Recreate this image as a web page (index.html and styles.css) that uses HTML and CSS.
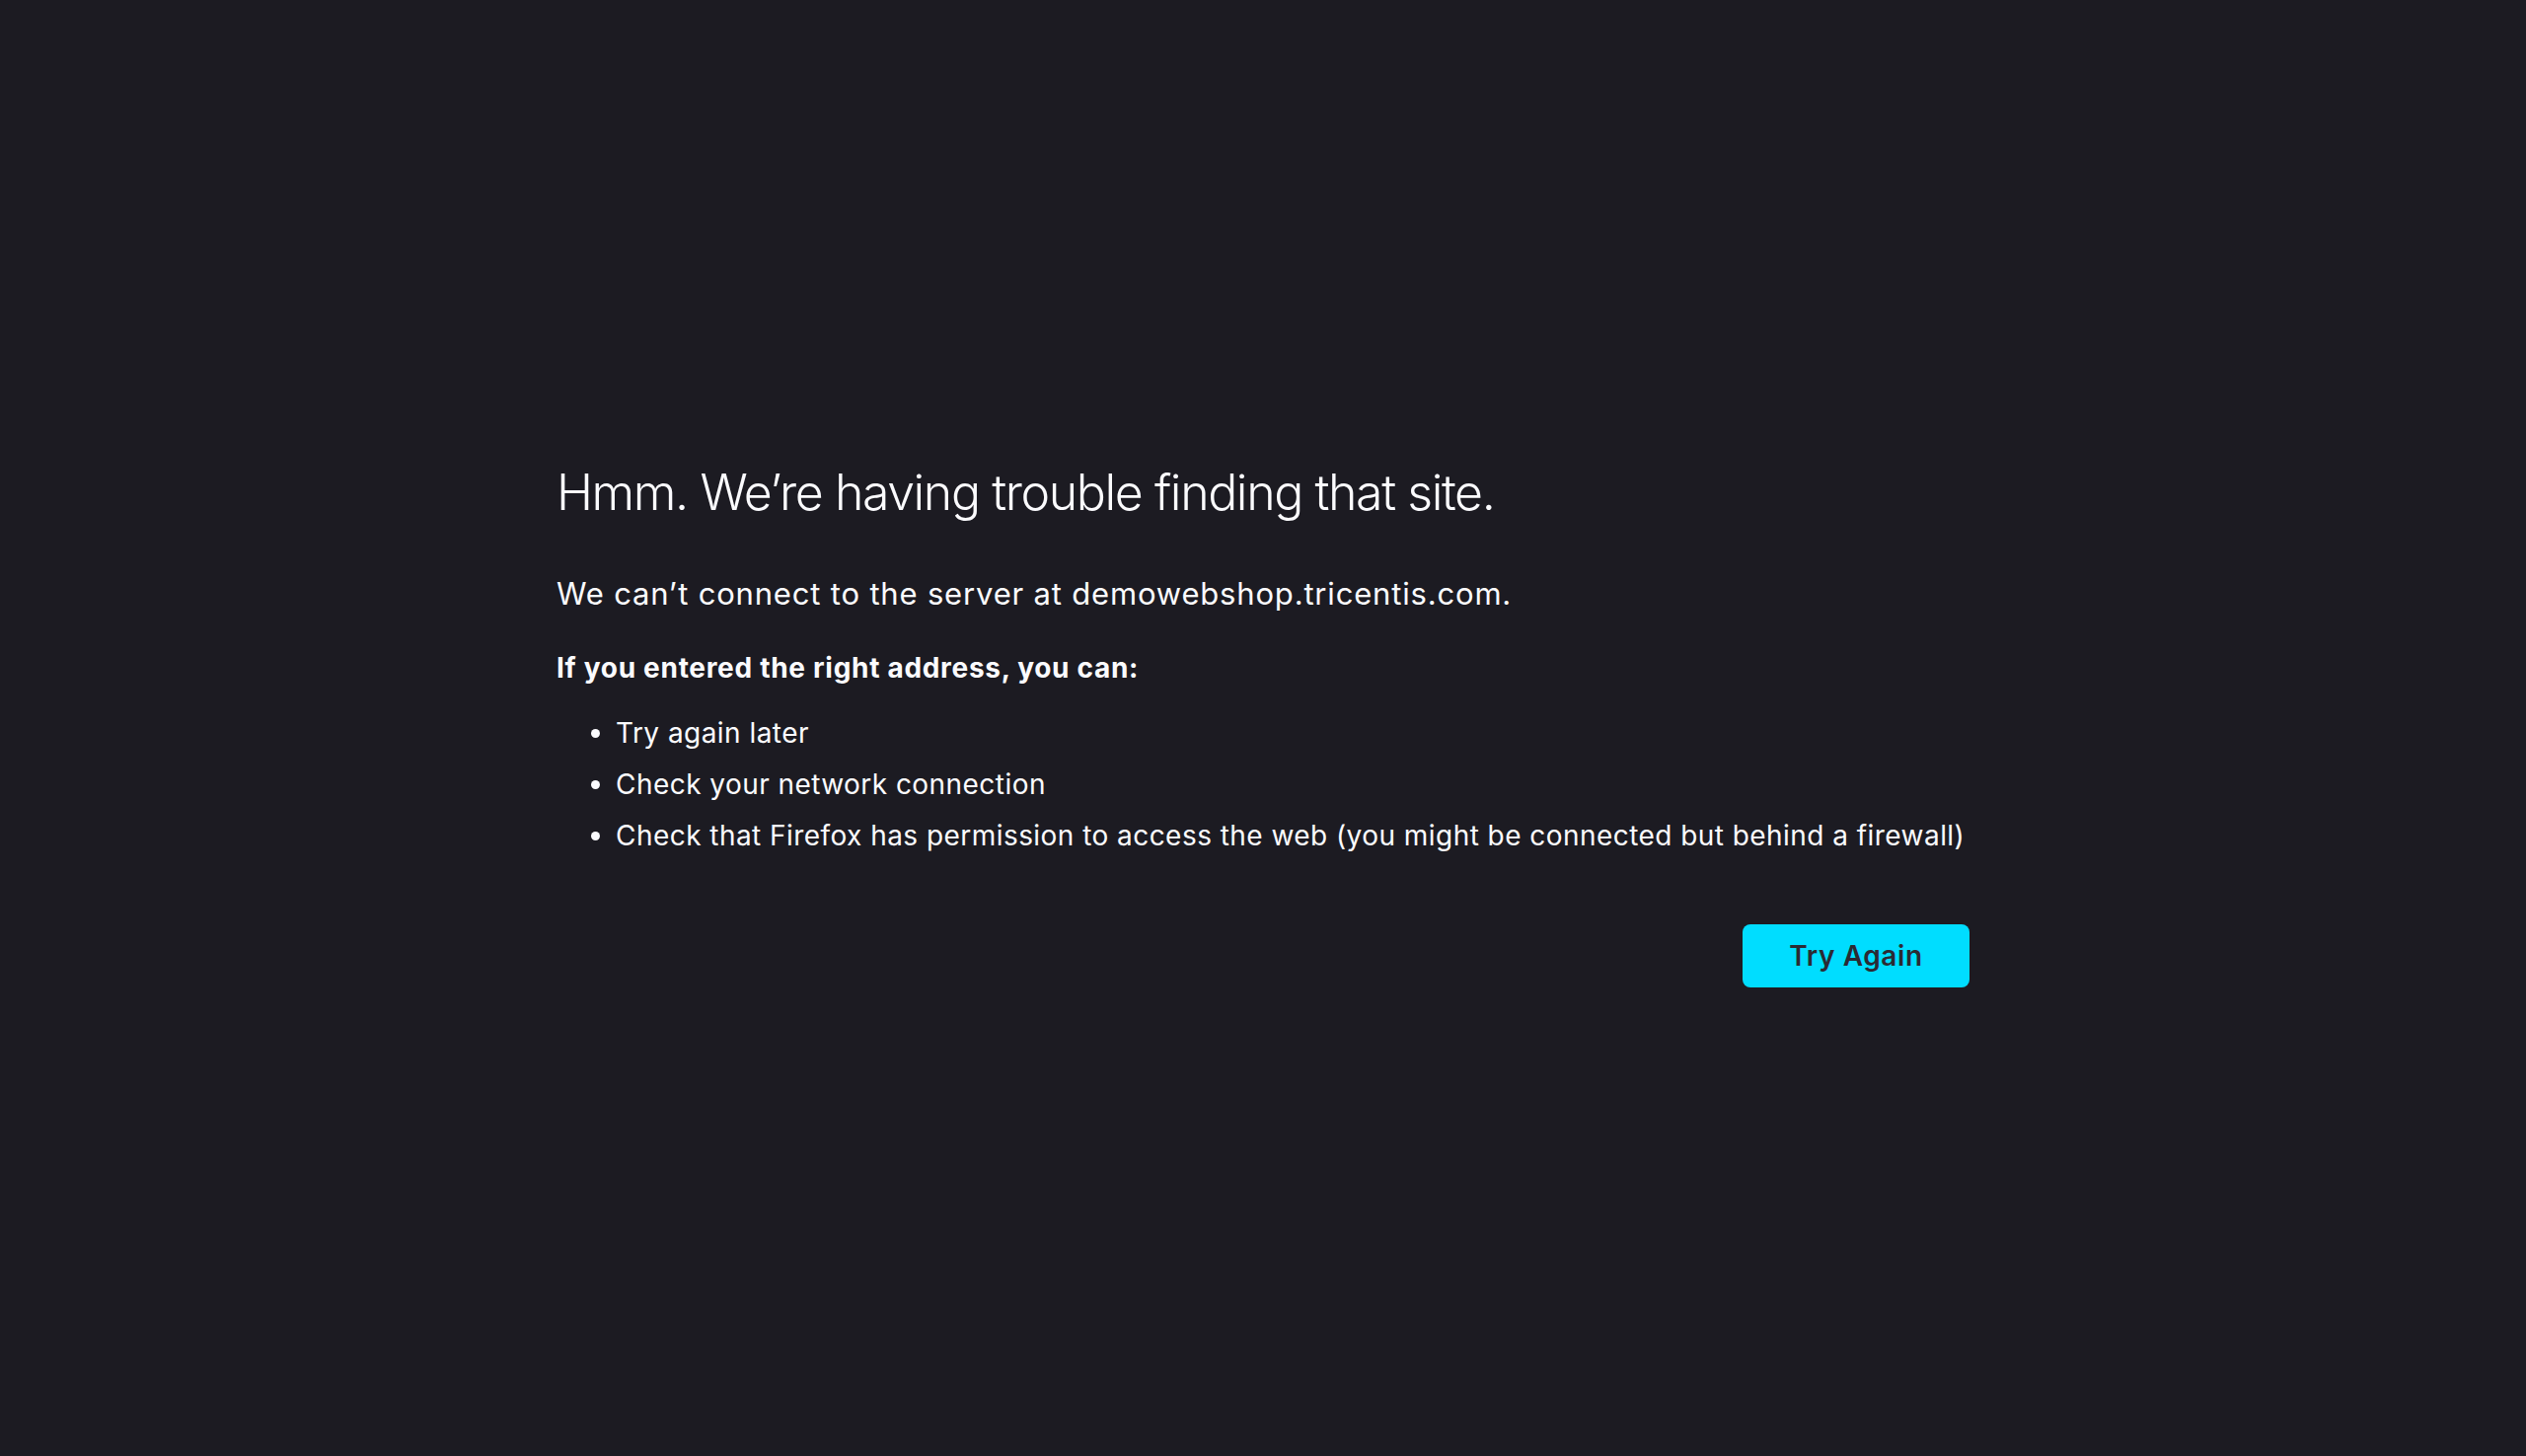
FILE: index.html
```html
<!DOCTYPE html>
<html lang="en">
<head>
<meta charset="utf-8">
<title>Problem loading page</title>
<link rel="stylesheet" href="styles.css">
</head>
<body>
<main class="container">
  <h1 class="title">Hmm. We’re having trouble finding that site.</h1>
  <p class="intro">We can’t connect to the server at demowebshop.tricentis.com.</p>
  <p class="lead">If you entered the right address, you can:</p>
  <ul class="tips">
    <li>Try again later</li>
    <li>Check your network connection</li>
    <li>Check that Firefox has permission to access the web (you might be connected but behind a firewall)</li>
  </ul>
  <div class="actions">
    <button class="btn-primary" type="button">Try Again</button>
  </div>
</main>
</body>
</html>
```

FILE: styles.css
```css
html, body {
  margin: 0;
  padding: 0;
}

body {
  background: #1c1b22;
  color: #fbfbfe;
  font-family: Inter, "Noto Sans", sans-serif;
  min-height: 100vh;
}

.container {
  width: 1432px;
  margin: 0 auto;
  padding-top: 467px;
  display: flex;
  flex-direction: column;
}

.title {
  margin: 0;
  font-size: 50px;
  line-height: 64px;
  font-weight: 300;
  letter-spacing: -1.4px;
}

.intro {
  margin: 51px 0 0;
  font-size: 31px;
  line-height: 40px;
  font-weight: 400;
  letter-spacing: 0.82px;
}

.lead {
  margin: 35px 0 0;
  font-size: 28px;
  line-height: 40px;
  font-weight: 700;
  letter-spacing: 0.7px;
}

.tips {
  margin: 20px 0 0;
  padding-left: 60px;
  font-size: 28px;
  line-height: 52px;
  letter-spacing: 0.45px;
}

.tips li {
  white-space: nowrap;
}

.actions {
  margin-top: 64px;
  display: flex;
  justify-content: flex-end;
}

.btn-primary {
  width: 230px;
  height: 64px;
  border: none;
  border-radius: 8px;
  background: #00ddff;
  color: #2b2a33;
  font-family: Inter, "Noto Sans", sans-serif;
  font-size: 28px;
  font-weight: 600;
  line-height: 64px;
  letter-spacing: 0.6px;
  padding: 0;
}
```
